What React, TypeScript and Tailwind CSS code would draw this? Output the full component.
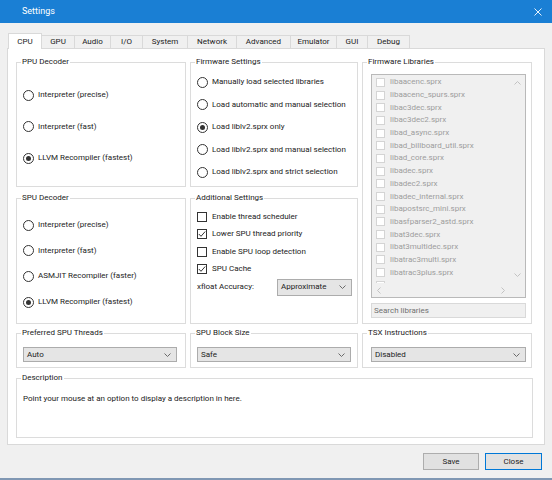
import React from 'react';

const libraries = [
  'libaacenc.sprx',
  'libaacenc_spurs.sprx',
  'libac3dec.sprx',
  'libac3dec2.sprx',
  'libad_async.sprx',
  'libad_billboard_util.sprx',
  'libad_core.sprx',
  'libadec.sprx',
  'libadec2.sprx',
  'libadec_internal.sprx',
  'libapostsrc_mini.sprx',
  'libasfparser2_astd.sprx',
  'libat3dec.sprx',
  'libat3multidec.sprx',
  'libatrac3multi.sprx',
  'libatrac3plus.sprx',
];

const tabs = [
  { label: 'CPU', w: 'w-[34px]' },
  { label: 'GPU', w: 'w-[34px]' },
  { label: 'Audio', w: 'w-[37px]' },
  { label: 'I/O', w: 'w-[33px]' },
  { label: 'System', w: 'w-[46px]' },
  { label: 'Network', w: 'w-[50px]' },
  { label: 'Advanced', w: 'w-[55px]' },
  { label: 'Emulator', w: 'w-[47px]' },
  { label: 'GUI', w: 'w-[32px]' },
  { label: 'Debug', w: 'w-[43px]' },
];

// petit chevron des listes déroulantes / barres de défilement
const Chevron = ({ dir = 'down', color = '#6a6a6a' }: { dir?: 'down' | 'up' | 'left' | 'right'; color?: string }) => {
  const pts = {
    down: '0.5,0.5 3.5,3.5 6.5,0.5',
    up: '0.5,3.5 3.5,0.5 6.5,3.5',
    left: '3.5,0.5 0.5,3.5 3.5,6.5',
    right: '0.5,0.5 3.5,3.5 0.5,6.5',
  }[dir];
  const vertical = dir === 'down' || dir === 'up';
  return (
    <svg width={vertical ? 7 : 4} height={vertical ? 4 : 7} viewBox={vertical ? '0 0 7 4' : '0 0 4 7'}>
      <polyline points={pts} fill="none" stroke={color} strokeWidth="1" />
    </svg>
  );
};

const GroupBox = ({ title, className = '', children }: { title: string; className?: string; children?: React.ReactNode }) => (
  <div className={`relative border border-[#dcdcdc] ${className}`}>
    <span className="absolute -top-[6px] left-[4px] bg-white px-px leading-[10px]">{title}</span>
    {children}
  </div>
);

const Radio = ({ label, checked = false }: { label: string; checked?: boolean }) => (
  <div className="flex items-center h-[12px] gap-[4px] pl-[6px]">
    <span className="w-[11px] h-[11px] rounded-full border border-[#333333] bg-white flex items-center justify-center shrink-0">
      {checked && <span className="w-[5px] h-[5px] rounded-full bg-[#333333]" />}
    </span>
    <span className="leading-[12px] whitespace-nowrap">{label}</span>
  </div>
);

const Check = ({ label, checked = false }: { label: string; checked?: boolean }) => (
  <div className="flex items-center h-[12px] gap-[5px] pl-[6px]">
    <span className="w-[10px] h-[10px] border border-[#333333] bg-white flex items-center justify-center shrink-0">
      {checked && (
        <svg width="8" height="8" viewBox="0 0 8 8">
          <polyline points="0.8,4 3,6.3 7.2,1.5" fill="none" stroke="#333333" strokeWidth="1" />
        </svg>
      )}
    </span>
    <span className="leading-[12px] whitespace-nowrap">{label}</span>
  </div>
);

const Combo = ({ value, className = '' }: { value: string; className?: string }) => (
  <div className={`flex items-center justify-between border border-[#acacac] bg-[#e5e5e5] pl-[3px] pr-[5px] ${className}`}>
    <span className="leading-[10px]">{value}</span>
    <Chevron />
  </div>
);

export default function App() {
  return (
    <div className="w-[552px] h-[480px] bg-[#f0f0f0] flex flex-col border-b-2 border-[#8097b3] text-[8px] text-[#222222] font-['Roboto',sans-serif] overflow-hidden">
      {/* barre de titre */}
      <div className="h-[23px] bg-[#1a7fd4] flex items-center justify-between pl-[22px] pr-[10px] text-white shrink-0">
        <span className="text-[9px]">Settings</span>
        <svg width="8" height="8" viewBox="0 0 8 8">
          <path d="M0.5 0.5 L7.5 7.5 M7.5 0.5 L0.5 7.5" stroke="#ffffff" strokeWidth="0.9" />
        </svg>
      </div>

      <div className="px-[7px] pt-[10px] flex flex-col">
        {/* onglets */}
        <div className="flex items-end h-[15px] pl-px">
          {tabs.map((t, i) => (
            <div
              key={t.label}
              className={`${t.w} ${i > 0 ? '-ml-px' : ''} flex items-center justify-center border-t border-x border-[#d9d9d9] ${
                i === 0 ? 'h-[16px] -mb-px bg-white relative z-10' : 'h-[13px] bg-[#f0f0f0]'
              }`}
            >
              {t.label}
            </div>
          ))}
        </div>

        {/* panneau CPU */}
        <div className="h-[397px] bg-white border border-[#d9d9d9] pl-[8px] pr-[11px] pt-[13px] flex flex-col">
          <div className="grid grid-cols-[170px_168px_170px] grid-rows-[125px_126px] gap-x-[4px] gap-y-[11px]">
            <GroupBox title="PPU Decoder" className="flex flex-col pt-[26px] gap-[19.5px]">
              <Radio label="Interpreter (precise)" />
              <Radio label="Interpreter (fast)" />
              <Radio label="LLVM Recompiler (fastest)" checked />
            </GroupBox>

            <GroupBox title="Firmware Settings" className="flex flex-col pt-[13px] gap-[10.5px]">
              <Radio label="Manually load selected libraries" />
              <Radio label="Load automatic and manual selection" />
              <Radio label="Load liblv2.sprx only" checked />
              <Radio label="Load liblv2.sprx and manual selection" />
              <Radio label="Load liblv2.sprx and strict selection" />
            </GroupBox>

            <GroupBox title="Firmware Libraries" className="row-span-2 flex flex-col pl-[8px] pr-[5px] pt-[11px]">
              <div className="h-[224px] border border-[#b9b9b9] bg-[#f0f0f0] flex flex-col">
                <div className="flex-1 flex min-h-0">
                  <div className="flex-1 overflow-hidden pt-px pl-[4px] text-[#9d9d9d]">
                    {libraries.map((lib) => (
                      <div key={lib} className="h-[12.7px] flex items-center gap-[5px]">
                        <span className="w-[9px] h-[9px] bg-white border border-[#d4d4d4] shrink-0" />
                        <span className="whitespace-nowrap leading-[10px]">{lib}</span>
                      </div>
                    ))}
                    {/* rangée suivante, à peine visible sous la dernière */}
                    <div className="h-[12.7px] flex items-start pt-[2px]">
                      <span className="w-[9px] h-[9px] bg-white border border-[#d4d4d4] shrink-0" />
                    </div>
                  </div>
                  <div className="w-[15px] flex flex-col items-center justify-between py-[6px]">
                    <Chevron dir="up" color="#c2c2c2" />
                    <Chevron dir="down" color="#c2c2c2" />
                  </div>
                </div>
                <div className="h-[14px] flex shrink-0 bg-[#f0f0f0]">
                  <div className="flex-1 flex items-center justify-between pl-[5px] pr-[5px]">
                    <Chevron dir="left" color="#c2c2c2" />
                    <Chevron dir="right" color="#c2c2c2" />
                  </div>
                  <div className="w-[15px]" />
                </div>
              </div>
              <div className="mt-[5px] h-[15px] border border-[#d9d9d9] bg-[#f0f0f0] flex items-center pl-[2px] text-[#707070]">
                Search libraries
              </div>
            </GroupBox>

            <GroupBox title="SPU Decoder" className="flex flex-col pt-[20px] gap-[13.7px]">
              <Radio label="Interpreter (precise)" />
              <Radio label="Interpreter (fast)" />
              <Radio label="ASMJIT Recompiler (faster)" />
              <Radio label="LLVM Recompiler (fastest)" checked />
            </GroupBox>

            <GroupBox title="Additional Settings" className="flex flex-col pt-[12px]">
              <div className="flex flex-col gap-[5.3px]">
                <Check label="Enable thread scheduler" />
                <Check label="Lower SPU thread priority" checked />
                <Check label="Enable SPU loop detection" />
                <Check label="SPU Cache" checked />
              </div>
              <div className="mt-[4px] flex items-center pl-[6px]">
                <span className="w-[80px]">xfloat Accuracy:</span>
                <Combo value="Approximate" className="w-[75px] h-[17px]" />
              </div>
            </GroupBox>
          </div>

          <div className="mt-[9px] grid grid-cols-[170px_168px_170px] gap-x-[4px] h-[35px]">
            <GroupBox title="Preferred SPU Threads" className="pt-[13px] pl-[6px] pr-[8px]">
              <Combo value="Auto" className="h-[15px]" />
            </GroupBox>
            <GroupBox title="SPU Block Size" className="pt-[13px] pl-[6px] pr-[6px]">
              <Combo value="Safe" className="h-[15px]" />
            </GroupBox>
            <GroupBox title="TSX Instructions" className="pt-[13px] pl-[8px] pr-[5px]">
              <Combo value="Disabled" className="h-[15px]" />
            </GroupBox>
          </div>

          <GroupBox title="Description" className="mt-[10px] h-[60px] w-[517px] pl-[6px] pt-[14px]">
            <span className="leading-[10px]">Point your mouse at an option to display a description in here.</span>
          </GroupBox>
        </div>

        {/* boutons */}
        <div className="mt-[8px] h-[17px] flex justify-end gap-[6px] pr-[3px]">
          <button className="w-[56px] h-[17px] border border-[#adadad] bg-[#e1e1e1] leading-[10px]">Save</button>
          <button className="w-[57px] h-[17px] border border-[#0078d7] bg-[#e1e1e1] leading-[10px]">Close</button>
        </div>
      </div>
    </div>
  );
}
